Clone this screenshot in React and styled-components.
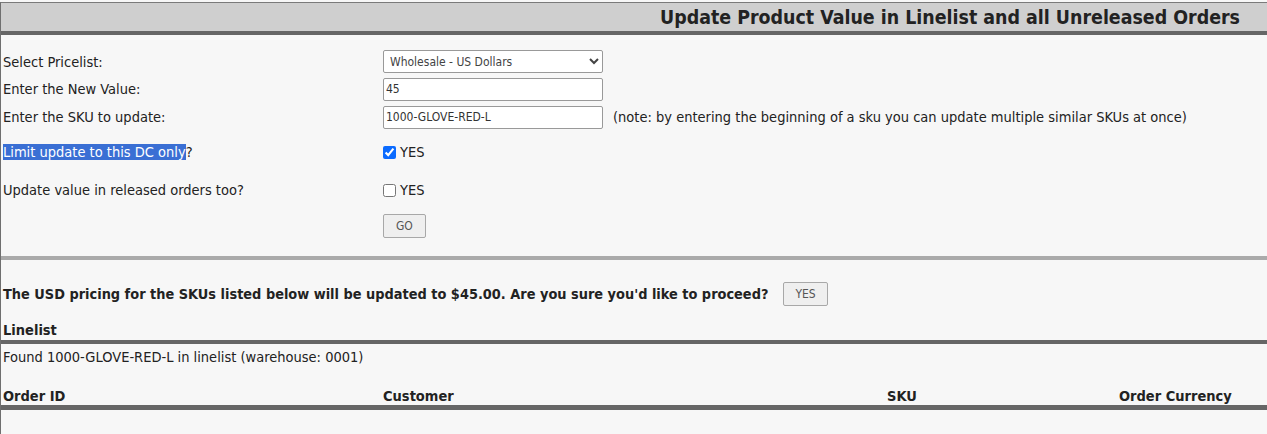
import React from "react";
import styled, { createGlobalStyle } from "styled-components";

const GlobalStyle = createGlobalStyle`
  body {
    margin: 0;
    background: #f7f7f7;
    font-family: Tahoma, "DejaVu Sans Condensed", "DejaVu Sans", sans-serif;
    color: #222;
  }
`;

const Page = styled.div`
  margin-top: 2px;
  min-height: 432px;
  border-left: 1px solid #6f6f6f;
  border-top: 1px solid #7a7a7a;
  background: #f7f7f7;
`;

const Header = styled.div`
  height: 28px;
  background: #cfcfcf;
  border-bottom: 4px solid #666;
  display: flex;
  align-items: center;
  justify-content: flex-end;
  padding-right: 27px;
`;

const Title = styled.h1`
  margin: 0;
  font-size: 19.4px;
  font-weight: bold;
  color: #222;
`;

const Form = styled.div`
  padding: 13px 0 11px 2px;
  border-bottom: 4px solid #aaa;
`;

const Row = styled.div`
  display: grid;
  grid-template-columns: 380px auto 1fr;
  align-items: center;
  height: ${(p) => p.$h}px;
  font-size: 14.5px;
`;

const Label = styled.span``;

const Selected = styled.span`
  background: #3a6fd4;
  color: #fff;
`;

const Field = styled.div`
  display: flex;
  align-items: center;
  gap: 10px;
`;

const Select = styled.select`
  width: 220px;
  height: 23px;
  font-family: inherit;
  font-size: 12px;
  color: #444;
  background: #fff;
  border: 1px solid #999;
  border-radius: 2px;
  padding: 0 2px;
`;

const Input = styled.input`
  box-sizing: border-box;
  width: 220px;
  height: 23px;
  font-family: inherit;
  font-size: 12px;
  color: #333;
  background: #fff;
  border: 1px solid #999;
  border-radius: 2px;
  padding: 0 2px;
`;

const Note = styled.span`
  font-size: 14.5px;
`;

const Check = styled.label`
  display: flex;
  align-items: center;
  gap: 4px;
  font-size: 14.5px;

  input {
    margin: 0;
    width: 13px;
    height: 13px;
    accent-color: #0b6bff;
  }
`;

const Button = styled.button`
  height: 24px;
  padding: 0 ${(p) => p.$px}px;
  font-family: inherit;
  font-size: 12px;
  color: #555;
  background: #efefef;
  border: 1px solid #a8a8a8;
  border-radius: 2px;
`;

const Confirm = styled.div`
  display: flex;
  align-items: center;
  gap: 15px;
  height: 24px;
  margin: 22px 0 0 2px;
  font-size: 14.4px;
  font-weight: bold;
`;

const Heading = styled.div`
  margin: 15px 0 0 2px;
  padding-bottom: 1px;
  line-height: 18px;
  font-size: 14.5px;
  font-weight: bold;
`;

const Bar = styled.div`
  height: ${(p) => p.$w}px;
  background: #666;
`;

const Found = styled.div`
  margin: 4px 0 0 2px;
  line-height: 18px;
  font-size: 14.5px;
`;

const TableHead = styled.div`
  display: grid;
  grid-template-columns: 380px 504px 232px 1fr;
  margin: 21px 0 0 2px;
  padding-bottom: 0;
  line-height: 18px;
  font-size: 14.5px;
  font-weight: bold;
`;

export default function App() {
  return (
    <>
      <GlobalStyle />
      <Page>
        <Header>
          <Title>Update Product Value in Linelist and all Unreleased Orders</Title>
        </Header>
        <Form>
          <Row $h={27}>
            <Label>Select Pricelist:</Label>
            <Select defaultValue="wholesale-usd">
              <option value="wholesale-usd">Wholesale - US Dollars</option>
            </Select>
          </Row>
          <Row $h={28}>
            <Label>Enter the New Value:</Label>
            <Input defaultValue="45" />
          </Row>
          <Row $h={28}>
            <Label>Enter the SKU to update:</Label>
            <Field>
              <Input defaultValue="1000-GLOVE-RED-L" />
              <Note>
                (note: by entering the beginning of a sku you can update multiple similar SKUs at once)
              </Note>
            </Field>
          </Row>
          <Row $h={42}>
            <Label>
              <Selected>Limit update to this DC only</Selected>?
            </Label>
            <Check>
              <input type="checkbox" defaultChecked /> YES
            </Check>
          </Row>
          <Row $h={34}>
            <Label>Update value in released orders too?</Label>
            <Check>
              <input type="checkbox" /> YES
            </Check>
          </Row>
          <Row $h={38}>
            <span />
            <div>
              <Button $px={12}>GO</Button>
            </div>
          </Row>
        </Form>
        <Confirm>
          <span>
            The USD pricing for the SKUs listed below will be updated to $45.00. Are you sure you'd like to proceed?
          </span>
          <Button $px={11}>YES</Button>
        </Confirm>
        <Heading>Linelist</Heading>
        <Bar $w={4} />
        <Found>Found 1000-GLOVE-RED-L in linelist (warehouse: 0001)</Found>
        <TableHead>
          <span>Order ID</span>
          <span>Customer</span>
          <span>SKU</span>
          <span>Order Currency</span>
        </TableHead>
        <Bar $w={5} />
      </Page>
    </>
  );
}
